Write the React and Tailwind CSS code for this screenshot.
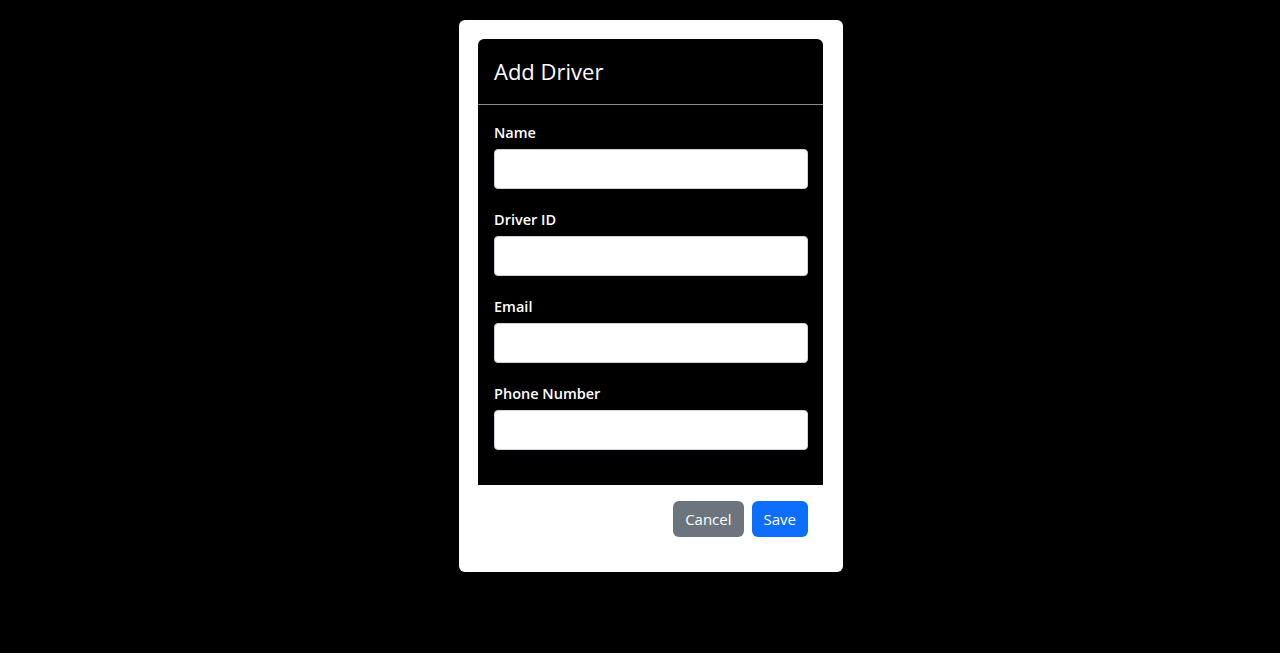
import { useState } from "react";

const fields = [
  { id: "name", label: "Name" },
  { id: "driverId", label: "Driver ID" },
  { id: "email", label: "Email" },
  { id: "phone", label: "Phone Number" },
];

export default function App() {
  const [form, setForm] = useState({ name: "", driverId: "", email: "", phone: "" });

  return (
    <div className="flex min-h-[653px] justify-center bg-black pt-5 pl-[22px] font-['Open_Sans',sans-serif]">
      <div className="flex h-[552px] w-[384px] flex-col rounded-md bg-white pt-[19px] pr-[20px] pl-[19px]">
        <div className="rounded-t-md bg-black">
          <div className="border-b border-[#8a8a8a] px-4 pt-4 pb-[17px]">
            <h5 className="text-[22px] leading-[32px] text-white">Add Driver</h5>
          </div>
          <div className="pt-4 pr-[15px] pb-4 pl-4">
            {fields.map((f) => (
              <div key={f.id} className="mb-[19px]">
                <label htmlFor={f.id} className="mb-1 block text-[14.5px] leading-[24px] font-semibold text-white">
                  {f.label}
                </label>
                <input
                  id={f.id}
                  value={form[f.id]}
                  onChange={(e) => setForm({ ...form, [f.id]: e.target.value })}
                  className="block h-[40px] w-full rounded border border-[#ced4da] bg-white px-3 text-base text-gray-900 outline-none"
                />
              </div>
            ))}
          </div>
        </div>
        <div className="flex justify-end gap-2 px-[15px] pt-4">
          <button type="button" className="h-9 rounded-md bg-[#6c757d] px-3 text-[15px] font-medium text-white">
            Cancel
          </button>
          <button type="button" className="h-9 rounded-md bg-[#0d6efd] px-3 text-[15px] font-medium text-white">
            Save
          </button>
        </div>
      </div>
    </div>
  );
}
